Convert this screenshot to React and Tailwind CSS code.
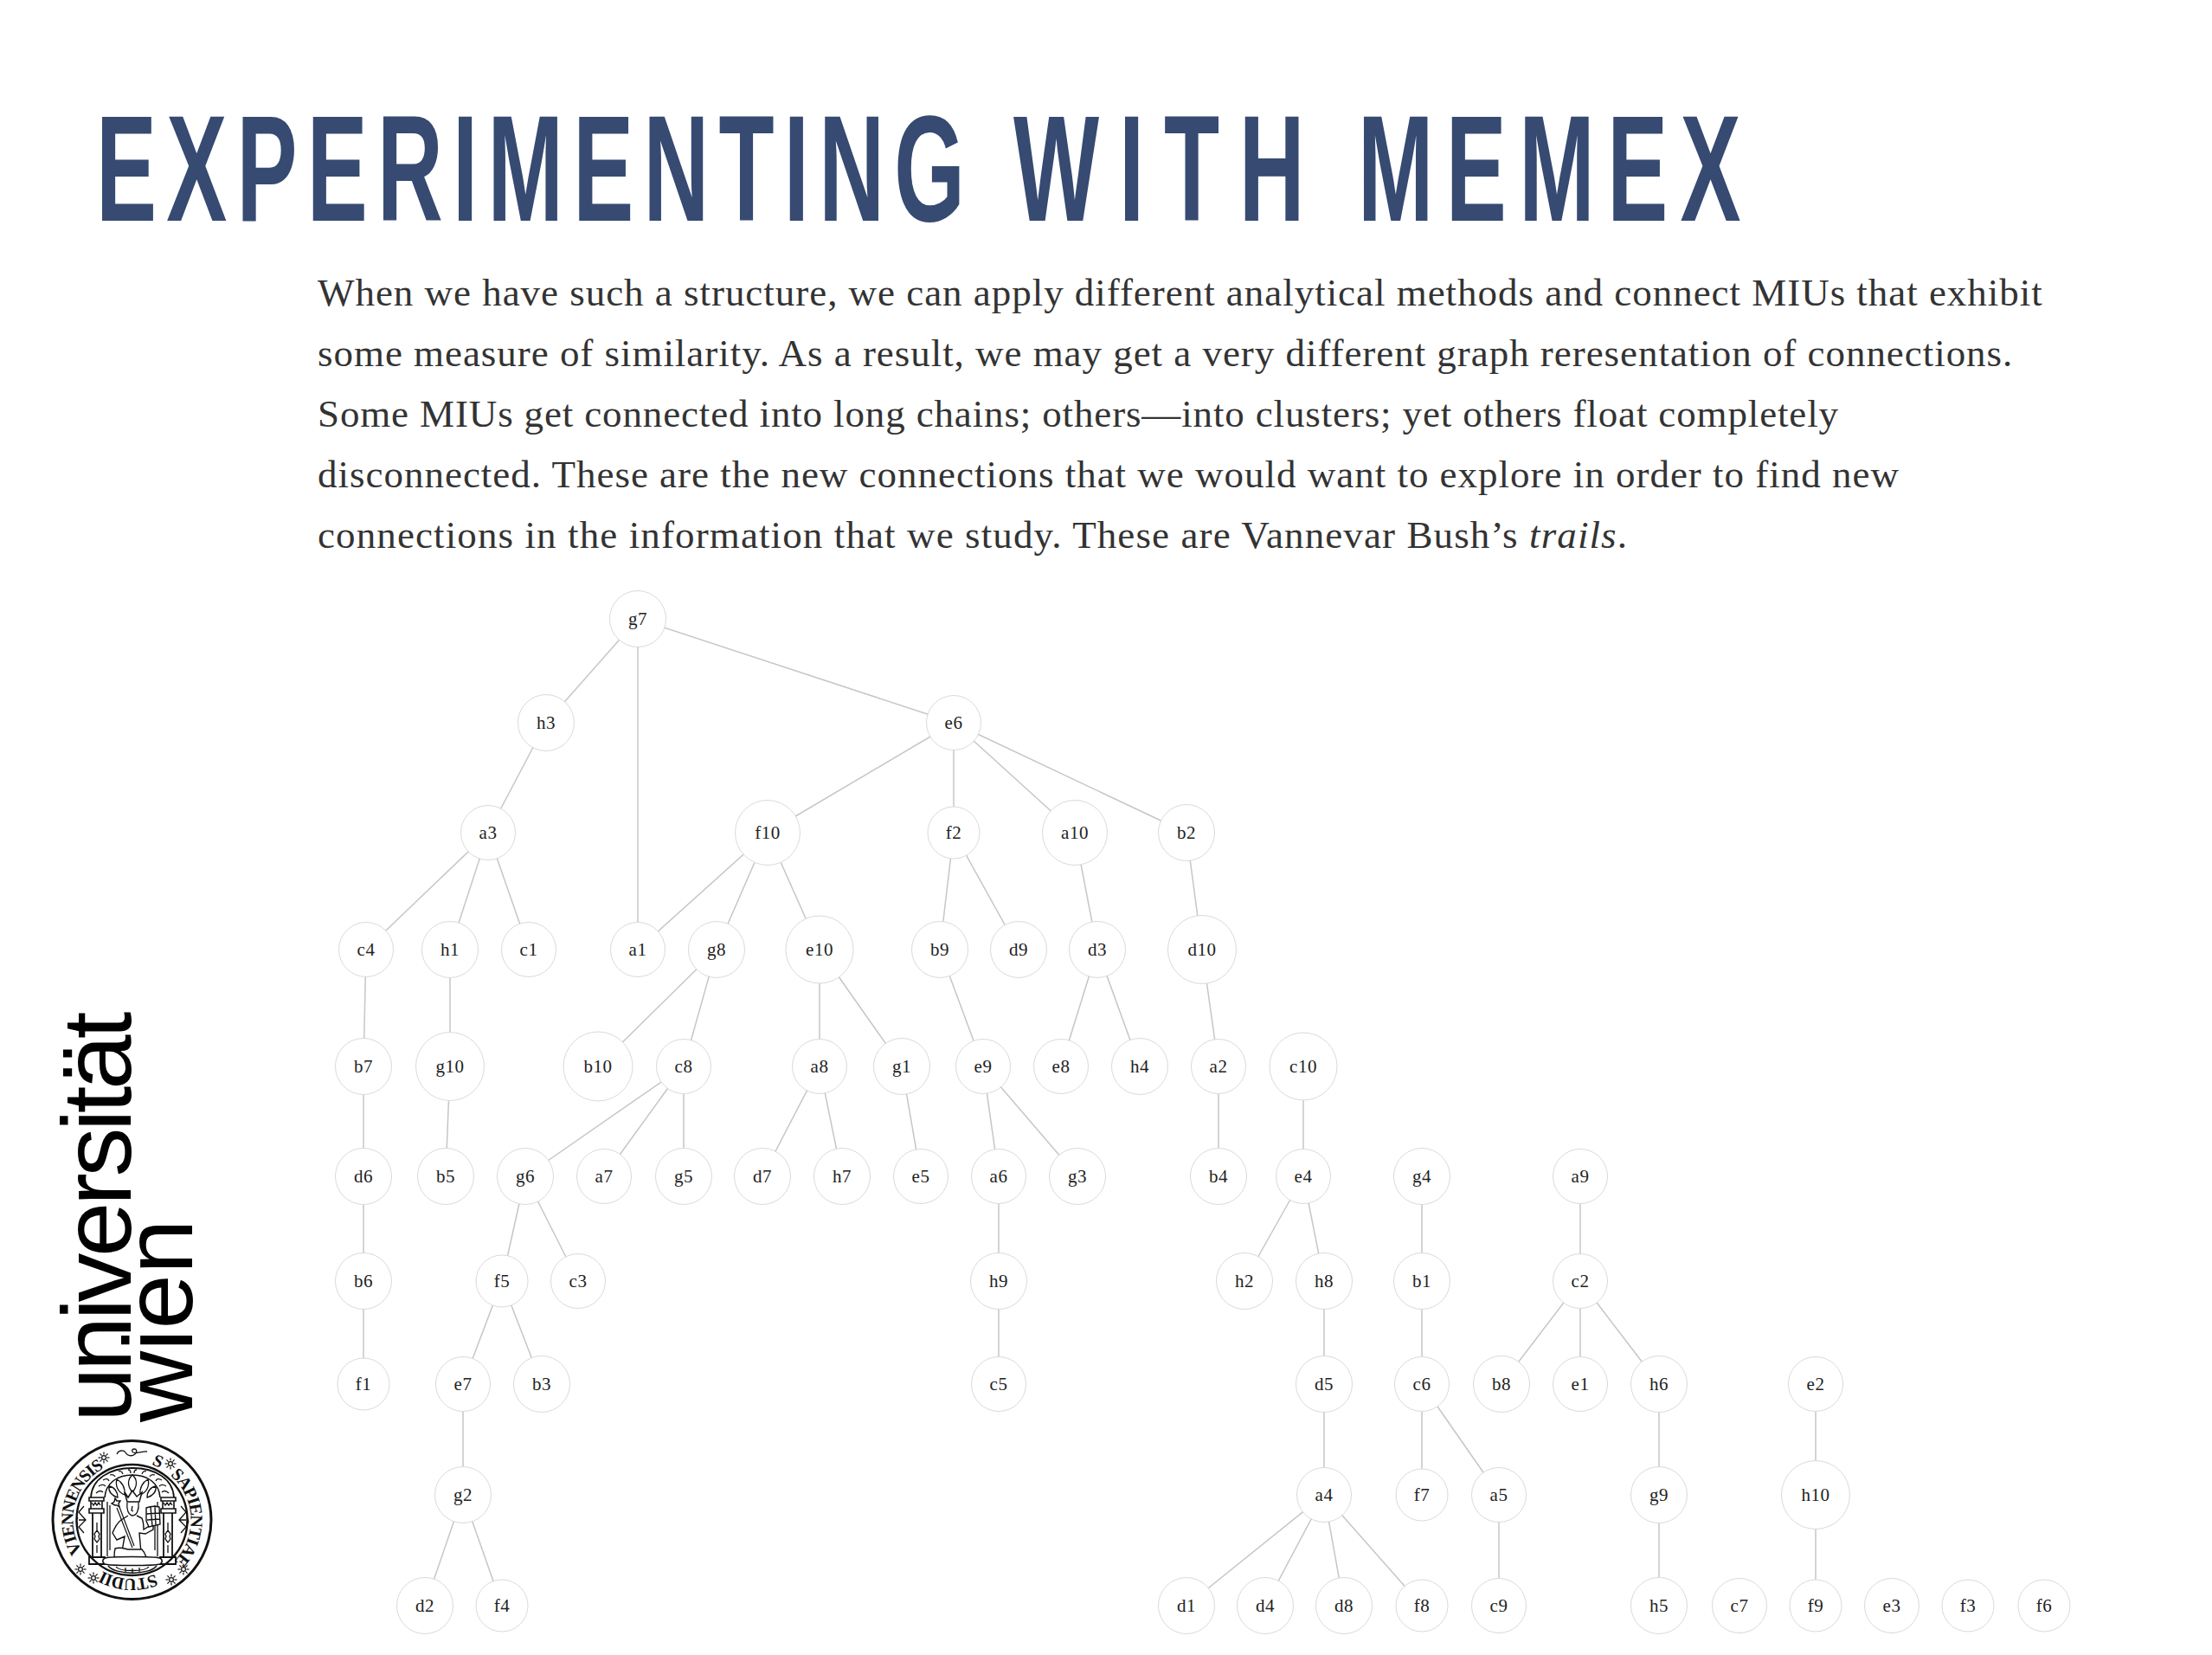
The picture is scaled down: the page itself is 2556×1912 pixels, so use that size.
const nodes = {
  g7: [737, 715], h3: [631, 835], e6: [1102, 835],
  a3: [564, 962], f10: [887, 962, 37.5], f2: [1102, 962], a10: [1242, 962, 37.5], b2: [1371, 962],
  c4: [423, 1097], h1: [520, 1097], c1: [611, 1097], a1: [737, 1097], g8: [828, 1097], e10: [947, 1097, 39],
  b9: [1086, 1097], d9: [1177, 1097], d3: [1268, 1097], d10: [1389, 1097, 39.5],
  b7: [420, 1232], g10: [520, 1232, 39.5], b10: [691, 1232, 40], c8: [790, 1232], a8: [947, 1232], g1: [1042, 1232],
  e9: [1136, 1232], e8: [1226, 1232], h4: [1317, 1232], a2: [1408, 1232], c10: [1506, 1232, 39],
  d6: [420, 1359], b5: [515, 1359], g6: [607, 1359], a7: [698, 1359], g5: [790, 1359], d7: [881, 1359], h7: [973, 1359],
  e5: [1064, 1359], a6: [1154, 1359], g3: [1245, 1359], b4: [1408, 1359], e4: [1506, 1359], g4: [1643, 1359], a9: [1826, 1359],
  b6: [420, 1480], f5: [580, 1480], c3: [668, 1480], h9: [1154, 1480], h2: [1438, 1480], h8: [1530, 1480], b1: [1643, 1480], c2: [1826, 1480],
  f1: [420, 1599], e7: [535, 1599], b3: [626, 1599], c5: [1154, 1599], d5: [1530, 1599], c6: [1643, 1599], b8: [1735, 1599], e1: [1826, 1599], h6: [1917, 1599], e2: [2098, 1599],
  g2: [535, 1727], a4: [1530, 1727], f7: [1643, 1727], a5: [1732, 1727], g9: [1917, 1727], h10: [2098, 1727, 39.5],
  d2: [491, 1855], f4: [580, 1855], d1: [1371, 1855], d4: [1462, 1855], d8: [1553, 1855], f8: [1643, 1855], c9: [1732, 1855],
  h5: [1917, 1855], c7: [2010, 1855], f9: [2098, 1855], e3: [2186, 1855], f3: [2274, 1855], f6: [2362, 1855],
};

// circle size follows the label width
const radius = { a: 31.5, b: 32.5, c: 31.5, d: 32.5, e: 31.5, f: 30, g: 32.5, h: 32.5 };

const edges = [
  "g7-h3", "g7-a1", "g7-e6", "h3-a3", "e6-f10", "e6-f2", "e6-a10", "e6-b2", "a3-c4", "a3-h1", "a3-c1",
  "f10-a1", "f10-g8", "f10-e10", "f2-b9", "f2-d9", "a10-d3", "b2-d10", "c4-b7", "h1-g10", "g8-b10", "g8-c8",
  "e10-a8", "e10-g1", "b9-e9", "d3-e8", "d3-h4", "d10-a2", "b7-d6", "g10-b5", "c8-g6", "c8-a7", "c8-g5",
  "a8-d7", "a8-h7", "g1-e5", "e9-a6", "e9-g3", "a2-b4", "c10-e4", "d6-b6", "g6-f5", "g6-c3", "a6-h9",
  "e4-h2", "e4-h8", "g4-b1", "a9-c2", "b6-f1", "f5-e7", "f5-b3", "h9-c5", "h8-d5", "b1-c6", "c2-b8", "c2-e1",
  "c2-h6", "e7-g2", "d5-a4", "c6-f7", "c6-a5", "h6-g9", "e2-h10", "g2-d2", "g2-f4", "a4-d1", "a4-d4", "a4-d8",
  "a4-f8", "a5-c9", "g9-h5", "h10-f9",
];

function Graph() {
  return (
    <svg viewBox="370 670 2186 1242" className="w-[2186px] h-[1242px] shrink-0">
      <g className="stroke-[#c6c6c6] stroke-[1.5]">
        {edges.map((e) => {
          const [from, to] = e.split("-");
          return <line key={e} x1={nodes[from][0]} y1={nodes[from][1]} x2={nodes[to][0]} y2={nodes[to][1]} />;
        })}
      </g>
      {Object.entries(nodes).map(([name, [x, y, r]]) => (
        <g key={name}>
          <circle cx={x} cy={y} r={r ?? radius[name[0]]} className="fill-white stroke-[#dadada] stroke-1" />
          <text x={x} y={y + 7} textAnchor="middle" className="fill-[#222] text-[21px] tracking-[0.5px] font-['Liberation_Serif',serif]">
            {name}
          </text>
        </g>
      ))}
    </svg>
  );
}

function Star({ x, y }) {
  return (
    <g transform={`translate(${x} ${y})`} strokeWidth="1.2">
      <circle r="2.4" />
      {[0, 45, 90, 135, 180, 225, 270, 315].map((a) => (
        <line key={a} x1="3.4" x2="6.5" transform={`rotate(${a})`} />
      ))}
    </g>
  );
}

const sealText = "fill-[#111] text-[20px] tracking-[-1.2px] font-bold font-['Liberation_Serif',serif]";

// university seal, coordinates are in a 230 box
function Seal() {
  return (
    <svg viewBox="0 0 230 230" className="w-[230px] h-[230px] -ml-[36px]">
      <defs>
        <path id="seal-ring" d="M 112.5 45 A 68 68 0 1 1 112.4 45" />
      </defs>
      <g fill="none" stroke="#111" strokeWidth="1.3">
        <circle cx="112.5" cy="113" r="91.5" strokeWidth="3" />
        <circle cx="112.5" cy="113" r="64" strokeWidth="2.4" />
        <path d="M95 37c2-5 8-5 10-2 2 4 7 5 11 2 3-3 2-6-1-6s-3 3-1 4c5 2 11-2 16-1" />
        <Star x={80} y={41} />
        <Star x={157} y={48} />
        <Star x={53} y={170} />
        <Star x={68} y={180} />
        <Star x={158} y={182} />
        <Star x={172} y={170} />
        {/* arch and scallops */}
        <path d="M65 87C66 66 86 53 113 53s47 13 48 34" strokeWidth="1.8" />
        <path d="M81 87C82 71 95 61 113 61s31 10 32 26" strokeWidth="1.6" />
        <path d="M71 82c3-3 6-3 8-1M74 74c3-2 6-2 8 0M79 67c3-2 6-2 7 1M87 61c3-1 5 0 6 2M97 57c2-1 4 0 5 3M108 55c2 0 3 1 3 4M118 55c-2 0-3 1-3 4M129 57c-2-1-4 0-5 3M139 61c-3-1-5 0-6 2M147 67c-3-2-6-2-7 1M152 74c-3-2-6-2-8 0M155 82c-3-3-6-3-8-1" />
        {/* columns */}
        <path d="M63 87h17v4H63zM65 91h13v9H65zM63 100h17v5H63zM146 87h17v4h-17zM148 91h13v9h-13zM146 100h17v5h-17z" strokeWidth="1.6" />
        <path d="M66 93l2 3 2-3 2 3 2-3 2 3M149 93l2 3 2-3 2 3 2-3 2 3" />
        <path d="M67 105v51M77 105v51M149 105v51M159 105v51" strokeWidth="1.8" />
        <path d="M72 116v9M72 142v9M154 116v9M154 142v9M72 125l3 4-1 3 1 3-3 4-3-4 1-3-1-3zM154 125l3 4-1 3 1 3-3 4-3-4 1-3-1-3z" />
        <path d="M63 156h18v8H63zM145 156h18v8h-18z" strokeWidth="1.8" />
        <path d="M84 92v63M87 96v52M142 92v63M139 96v52" />
        {/* shell */}
        <path d="M113 81c-6-7-6-15 0-20 6 5 6 13 0 20zM104 84c-8-3-11-11-9-18 6 3 10 10 9 18zM122 84c8-3 11-11 9-18-6 3-10 10-9 18zM96 87c-7-2-11-7-10-13 6 1 10 6 10 13zM130 87c7-2 11-7 10-13-6 1-10 6-10 13z" />
        {/* king */}
        <path d="M104 81l4 6 5-8 5 7 6-5-3 11h-14z" strokeWidth="1.5" fill="#fff" />
        <path d="M107 93c-1 7 1 14 6 15 5 0 8-7 7-15M113 97l-1 5 2 1" />
        <path d="M108 108l-8 5c-4 3-8 10-10 15l5 8 9-4-3 17M118 108l6 3c2 5 2 9 2 13l5-3 6-2v5l-9 5-7-1 2 23" strokeWidth="1.4" fill="#fff" />
        <path d="M93 146c6-2 10 0 15 1h16c3 3 4 6 5 9H92c0-3 0-6 1-10z" strokeWidth="1.4" fill="#fff" />
        <path d="M95 99l18 46M98 98l17 45" strokeWidth="1.2" />
        <path d="M93 96l-4-2 3-2 1-4 2 3 4 0-2 3 1 4-3-2z" strokeWidth="1.4" fill="#fff" />
        <path d="M129 99c5-2 11-2 15-1l1 20-13 3-3-7zM134 98l2 22M139 98l1 21M129 106l15-1M130 113l15-1" strokeWidth="1.4" fill="#fff" />
        {/* base */}
        <path d="M81 157c8-2 56-2 64 0 3 2 3 5 0 7-8 2-56 2-64 0-3-2-3-5 0-7z" strokeWidth="1.6" fill="#fff" />
        <path d="M85 166c8 11 48 11 56 0M94 167c4 6 34 6 38 0M105 168v5M113 169v5M121 168v5" />
        {/* side ornaments */}
        <path d="M57 97l-6 7 8 9-8 8 6 7M50 110c-2 3-2 6 0 8M51 113h8" />
        <path d="M169 97l6 7-8 9 8 8-6 7M176 110c2 3 2 6 0 8M175 113h-8" />
      </g>
      <text className={sealText}>
        <textPath href="#seal-ring" startOffset="23">S</textPath>
      </text>
      <text className={sealText}>
        <textPath href="#seal-ring" startOffset="48">SAPIENTIAE</textPath>
      </text>
      <text className={sealText}>
        <textPath href="#seal-ring" startOffset="186">STUDII</textPath>
      </text>
      <text className={sealText}>
        <textPath href="#seal-ring" startOffset="282">VIENNENSIS</textPath>
      </text>
    </svg>
  );
}

function Title() {
  const wordClass = "block origin-left whitespace-nowrap scale-x-[0.6]";
  return (
    <h1 className="flex pt-[100px] pl-[111px] h-[300px] font-['Liberation_Sans',sans-serif] font-bold text-[175px] leading-[190px] text-[#364a72]">
      <div className="w-[1060px]">
        <span className={`${wordClass} tracking-[18.7px]`}>EXPERIMENTING</span>
      </div>
      <div className="w-[398px]">
        <span className={`${wordClass} tracking-[38px]`}>WITH</span>
      </div>
      <div>
        <span className={`${wordClass} tracking-[24px]`}>MEMEX</span>
      </div>
    </h1>
  );
}

export default function App() {
  return (
    <div className="w-[2556px] h-[1912px] bg-white overflow-hidden">
      <Title />
      <div className="mt-[3px] pl-[367px] h-[367px] whitespace-nowrap font-['Liberation_Serif',serif] text-[45px] leading-[70px] text-[#333]">
        <p className="tracking-[0.97px]">When we have such a structure, we can apply different analytical methods and connect MIUs that exhibit</p>
        <p className="tracking-[0.96px]">some measure of similarity. As a result, we may get a very different graph reresentation of connections.</p>
        <p className="tracking-[0.86px]">Some MIUs get connected into long chains; others—into clusters; yet others float completely</p>
        <p className="tracking-[0.99px]">disconnected. These are the new connections that we would want to explore in order to find new</p>
        <p className="tracking-[1.11px]">
          connections in the information that we study. These are Vannevar Bush’s <em>trails</em>.
        </p>
      </div>
      <div className="flex h-[1242px]">
        <aside className="w-[370px] shrink-0 pl-[76px] pb-[39px] flex flex-col justify-end">
          <div className="[writing-mode:vertical-rl] rotate-180 self-start font-['Liberation_Sans',sans-serif] text-[114px] leading-[71px] text-black">
            <div className="tracking-[-4.5px]">universität</div>
            <div>wien</div>
          </div>
          <Seal />
        </aside>
        <Graph />
      </div>
    </div>
  );
}
